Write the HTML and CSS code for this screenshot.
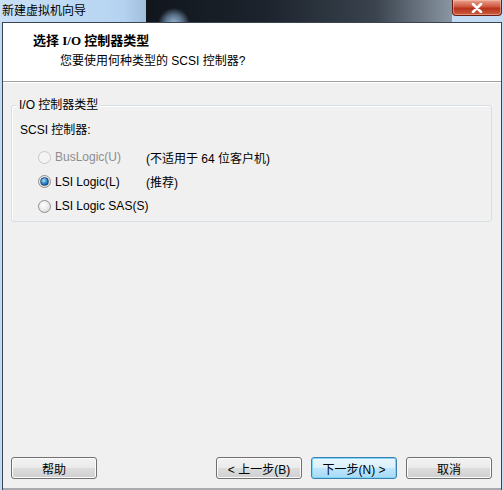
FILE: index.html
```html
<!DOCTYPE html>
<html lang="zh-CN">

<head>
    <meta charset="UTF-8">
    <title>新建虚拟机向导</title>
    <link rel="stylesheet" href="styles.css">
</head>

<body>
    <div class="window">
        <div class="titlebar">
            <div class="caption">新建虚拟机向导</div>
            <div class="desk"></div>
            <button class="close">
                <svg width="14" height="10" viewBox="0 0 14 10">
                    <path d="M3 1 L11 9 M11 1 L3 9" stroke="#fff" stroke-width="2.6" stroke-linecap="round" />
                </svg>
            </button>
        </div>
        <div class="client">
            <div class="header">
                <div class="htitle">选择 I/O 控制器类型</div>
                <div class="hsub">您要使用何种类型的 SCSI 控制器?</div>
            </div>
            <div class="body">
                <div class="group">
                    <div class="legend">I/O 控制器类型</div>
                    <div class="glabel">SCSI 控制器:</div>
                    <div class="opts">
                        <div class="opt disabled">
                            <span class="radio"></span>
                            <span class="name">BusLogic(U)</span>
                            <span class="note">(不适用于 64 位客户机)</span>
                        </div>
                        <div class="opt">
                            <span class="radio on"></span>
                            <span class="name">LSI Logic(L)</span>
                            <span class="note">(推荐)</span>
                        </div>
                        <div class="opt">
                            <span class="radio"></span>
                            <span class="name">LSI Logic SAS(S)</span>
                        </div>
                    </div>
                </div>
                <div class="buttons">
                    <button class="btn">帮助</button>
                    <div class="right">
                        <button class="btn">&lt; 上一步(B)</button>
                        <button class="btn def">下一步(N) &gt;</button>
                        <button class="btn">取消</button>
                    </div>
                </div>
            </div>
        </div>
    </div>
</body>

</html>
```

FILE: styles.css
```css
* {
    margin: 0;
    padding: 0;
    box-sizing: border-box;
}

body {
    width: 503px;
    height: 490px;
    overflow: hidden;
    font-family: "Liberation Sans", "Noto Sans CJK SC", sans-serif;
    font-size: 12px;
    color: #000;
    background: #2b323a;
}

.window {
    display: flex;
    flex-direction: column;
    height: 490px;
    width: 503px;
    background: #c2dbf2;
    padding: 0 0 0 2px;
}

.titlebar {
    display: flex;
    height: 22px;
    margin-left: -2px;
}

.caption {
    width: 146px;
    padding: 3px 0 0 2px;
    line-height: 16px;
    background: linear-gradient(90deg, #c9e0f6, #b5d3f1 85%, #9fbedc);
    color: #000;
}

.desk {
    flex: 1;
    background:
        radial-gradient(circle at 28px 24px, #9fbcd9 0, #5a7088 9px, rgba(30, 40, 52, 0) 16px),
        linear-gradient(90deg, #11161d, #1d242d 40%, #3a434e 75%, #8a96a3);
}

.close {
    width: 50px;
    height: 16px;
    margin-right: 1px;
    border: 1px solid #6b1f14;
    border-top: none;
    border-radius: 0 0 4px 4px;
    background: linear-gradient(#e8a494, #d0563d 45%, #b6321c 55%, #cc5e3f);
    display: flex;
    justify-content: center;
    align-items: center;
    box-shadow: inset 0 0 0 1px rgba(255, 200, 180, 0.5);
}

.client {
    flex: 1;
    display: flex;
    flex-direction: column;
    border: 1px solid #3b4552;
    border-bottom: none;
    margin-right: 1px;
    background: #f0f0f0;
}

.header {
    height: 59px;
    background: #fff;
    border-bottom: 1px solid #a0a0a0;
    padding: 10px 0 0 30px;
}

.htitle {
    font-weight: bold;
    line-height: 16px;
    font-family: "Liberation Serif", "Noto Sans CJK SC", serif;
    font-size: 13px;
}

.hsub {
    padding: 4px 0 0 27px;
    line-height: 16px;
}

.body {
    flex: 1;
    display: flex;
    flex-direction: column;
    border-top: 1px solid #fff;
    border-bottom: 2px solid #a7abb0;
    padding: 0 9px 0 8px;
}

.group {
    margin-top: 22px;
    height: 117px;
    border: 1px solid #d5dfe5;
    border-radius: 3px;
    box-shadow: inset 1px 1px 0 #fff;
    padding: 0 0 0 8px;
}

.legend {
    width: fit-content;
    margin: -9px 0 0 -3px;
    padding: 0 2px;
    background: #f0f0f0;
    line-height: 16px;
}

.glabel {
    margin-top: 9px;
    line-height: 16px;
}

.opts {
    display: flex;
    flex-direction: column;
    gap: 8.5px;
    margin-top: 11px;
    padding-left: 18px;
}

.opt {
    display: flex;
    align-items: center;
    height: 16px;
    white-space: nowrap;
}

.radio {
    width: 13px;
    height: 13px;
    flex: none;
    border-radius: 50%;
    border: 1px solid #8e8f8f;
    background: radial-gradient(circle at 40% 35%, #fff, #e6e6e6 60%, #cfcfcf);
    display: flex;
    justify-content: center;
    align-items: center;
}

.radio.on::after {
    content: "";
    width: 7px;
    height: 7px;
    border-radius: 50%;
    background: radial-gradient(circle at 40% 35%, #a8e0fa, #1c72b8 60%, #0d4a84);
    border: 1px solid #234e7a;
}

.opt.disabled .radio {
    border-color: #c8c8c8;
    background: #f4f4f4;
}

.name {
    min-width: 95px;
    padding-left: 4px;
}

.opt.disabled .name {
    color: #8d8d8d;
}

.buttons {
    margin-top: auto;
    margin-bottom: 9px;
    display: flex;
    justify-content: space-between;
}

.right {
    display: flex;
    gap: 9px;
}

.btn {
    width: 86px;
    height: 22px;
    font-family: "Liberation Sans", "Noto Sans CJK SC", sans-serif;
    font-size: 12px;
    color: #000;
    border: 1px solid #707070;
    border-radius: 3px;
    background: linear-gradient(#f2f2f2, #ebebeb 48%, #dddddd 52%, #cfcfcf);
    box-shadow: inset 0 0 0 1px #fcfcfc;
}

.btn.def {
    border-color: #3c7fb1;
    background: linear-gradient(#eaf6fd, #d9f0fc 48%, #bee6fd 52%, #a7d9f5);
    box-shadow: inset 0 0 0 1px #7dd8f6;
}
```
